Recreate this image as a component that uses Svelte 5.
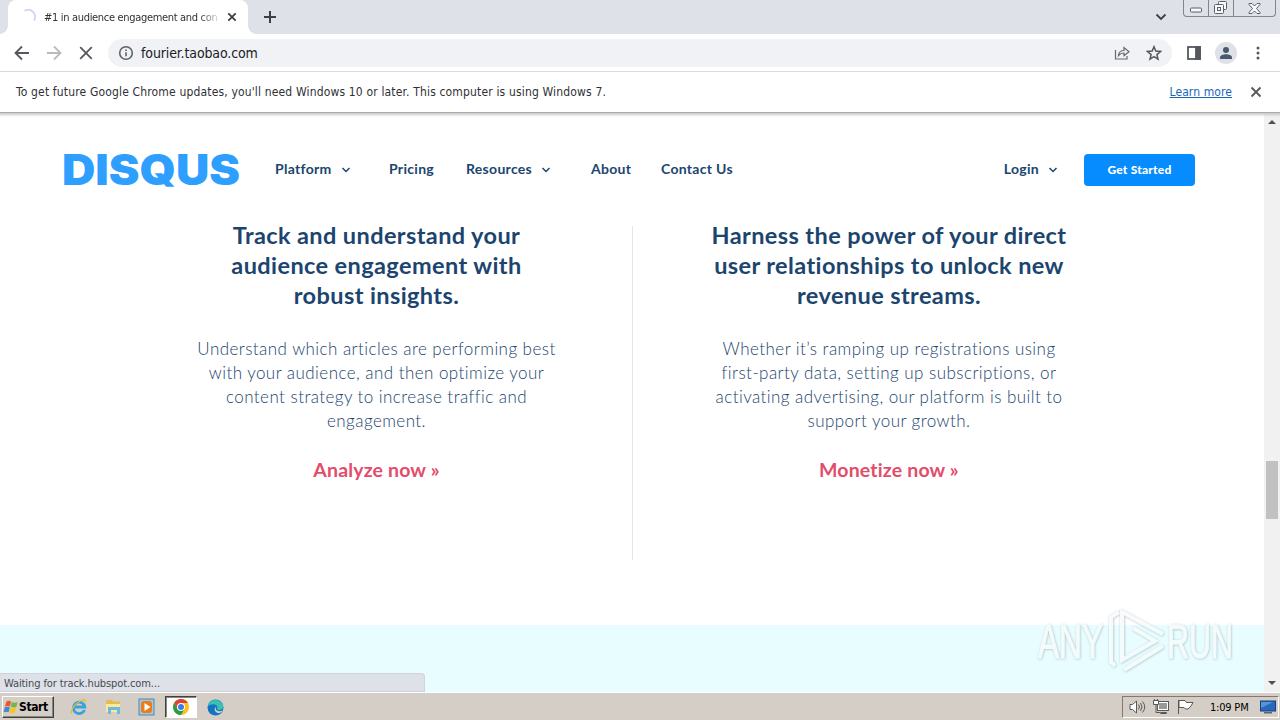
<script>
	const menu = [
		{ label: 'Platform', arrow: true, key: 'platform' },
		{ label: 'Pricing', key: 'pricing' },
		{ label: 'Resources', arrow: true, key: 'resources' },
		{ label: 'About', key: 'about' },
		{ label: 'Contact Us', key: 'contact' }
	];

	const features = [
		{
			title: ['Track and understand your', 'audience engagement with', 'robust insights.'],
			body: [
				'Understand which articles are performing best',
				'with your audience, and then optimize your',
				'content strategy to increase traffic and',
				'engagement.'
			],
			link: 'Analyze now »'
		},
		{
			title: ['Harness the power of your direct', 'user relationships to unlock new', 'revenue streams.'],
			body: [
				'Whether it’s ramping up registrations using',
				'first-party data, setting up subscriptions, or',
				'activating advertising, our platform is built to',
				'support your growth.'
			],
			link: 'Monetize now »'
		}
	];
</script>

{#snippet chevron()}
	<svg class="chevron" width="10" height="8" viewBox="0 0 10 8"><path d="M1.500 2l3.500 3.500L8.500 2" /></svg>
{/snippet}

<div class="screen">
	<div class="tabstrip">
		<div class="tab">
			<svg class="spinner" width="16" height="16" viewBox="0 0 16 16"><path d="M4.500 1.800A7 7 0 0 1 14 11.500" /></svg>
			<span class="tab-title">#1 in audience engagement and con</span>
			<svg class="tab-close" width="10" height="10" viewBox="0 0 10 10"><path d="M1.300 1.300l7.400 7.400M8.700 1.300L1.300 8.700" /></svg>
		</div>
		<svg class="new-tab" width="12" height="12" viewBox="0 0 12 12"><path d="M6 0v12M0 6h12" /></svg>
		<svg class="tab-search" width="12" height="8" viewBox="0 0 12 8"><path d="M1.500 1.500L6 6l4.500-4.500" /></svg>
		<div class="window-buttons">
			<div class="win min">
				<svg width="13" height="6" viewBox="0 0 13 6"><rect x=".5" y="1" width="11" height="4" rx="1" /></svg>
			</div>
			<div class="win restore">
				<svg width="14" height="14" viewBox="0 0 14 14">
					<path d="M4.500 3.500v-2q0-1 1-1h6q1 0 1 1v6q0 1-1 1h-2" />
					<rect x=".5" y="3.500" width="9" height="9" rx="1" />
					<rect x="3.500" y="6.500" width="3" height="3" />
				</svg>
			</div>
			<div class="win close">
				<svg width="13" height="11" viewBox="0 0 13 11">
					<path d="M1 .5h3l2.500 2.500L9 .5h3v1L8.500 5.500 12 9.500v1H9L6.500 8 4 10.500H1v-1l3.500-4L1 1.500z" />
				</svg>
			</div>
		</div>
	</div>

	<div class="toolbar">
		<svg class="nav-icon" width="16" height="16" viewBox="0 0 16 16"><path d="M15 8H2M8 1.500L1.500 8 8 14.500" /></svg>
		<svg class="nav-icon faded" width="16" height="16" viewBox="0 0 16 16"><path d="M1 8h13M8 1.500L14.500 8 8 14.500" /></svg>
		<svg class="nav-icon" width="16" height="16" viewBox="0 0 16 16"><path d="M2.200 2.200l11.600 11.600M13.800 2.200L2.200 13.800" /></svg>
		<div class="omnibox">
			<svg class="info" width="16" height="16" viewBox="0 0 16 16">
				<circle cx="8" cy="8" r="6.300" />
				<path d="M8 7.200v4M8 4.500v1.600" />
			</svg>
			<span class="url">fourier.taobao.com</span>
			<svg class="share" width="16" height="16" viewBox="0 0 16 16">
				<path d="M1.500 5v9h11.500v-3" />
				<path d="M4.500 10.500c.4-3.600 2.400-5 5.500-5V2.500L15 6.700l-5 4V8c-2.400 0-4 .7-5.500 2.500z" />
			</svg>
			<svg class="star" width="16" height="16" viewBox="0 0 16 16"><path d="M8 1.700l1.800 4.400 4.700.4-3.600 3.100 1.100 4.600L8 11.700l-4 2.500 1.100-4.600-3.600-3.100 4.700-.4z" /></svg>
		</div>
		<svg class="panel" width="14" height="14" viewBox="0 0 14 14">
			<rect x="1" y="1" width="12" height="12" />
			<rect class="solid" x="9" y="1" width="4" height="12" />
		</svg>
		<div class="avatar">
			<svg width="14" height="14" viewBox="0 0 14 14"><circle cx="7" cy="4" r="3" /><path d="M1 13v-1.500C1 9.400 4.500 8.300 7 8.300s6 1.100 6 3.200V13z" /></svg>
		</div>
		<svg class="dots" width="4" height="16" viewBox="0 0 4 16"><circle cx="2" cy="3" r="1.500" /><circle cx="2" cy="8" r="1.500" /><circle cx="2" cy="13" r="1.500" /></svg>
	</div>

	<div class="infobar">
		<span class="notice">To get future Google Chrome updates, you'll need Windows 10 or later. This computer is using Windows 7.</span>
		<span class="learn">Learn more</span>
		<svg class="info-close" width="12" height="12" viewBox="0 0 12 12"><path d="M1.500 1.500l9 9M10.500 1.500l-9 9" /></svg>
	</div>

	<div class="viewport">
		<div class="page">
			<header>
				<svg class="logo" width="178" height="52" viewBox="0 0 178 52">
					<text x="-1" y="41" textLength="178" lengthAdjust="spacingAndGlyphs">DISQUS</text>
				</svg>
				<nav>
					{#each menu as item}
						<span class="menu-item {item.key}">{item.label}{#if item.arrow}{@render chevron()}{/if}</span>
					{/each}
				</nav>
				<span class="menu-item login">Login{@render chevron()}</span>
				<button class="cta">Get Started</button>
			</header>

			<main>
				{#each features as feature}
					<section>
						<h2>
							{#each feature.title as line}<span>{line}</span>{/each}
						</h2>
						<p>
							{#each feature.body as line}<span>{line}</span>{/each}
						</p>
						<a href="#more">{feature.link}</a>
					</section>
				{/each}
			</main>
			<div class="band"></div>
		</div>
		<div class="scrollbar">
			<svg width="8" height="4" viewBox="0 0 8 4"><path d="M0 4l4-4 4 4z" /></svg>
			<div class="thumb"></div>
			<svg width="8" height="4" viewBox="0 0 8 4"><path d="M0 0l4 4 4-4z" /></svg>
		</div>
		<div class="status">Waiting for track.hubspot.com...</div>
		<svg class="watermark" width="220" height="78" viewBox="0 0 220 78">
			<defs>
				<filter id="glow" x="-10%" y="-10%" width="120%" height="120%">
					<feDropShadow dx="0.5" dy="0.5" stdDeviation="1.3" flood-color="#8d9ca0" flood-opacity="0.75" />
				</filter>
			</defs>
			<g class="mark" filter="url(#glow)">
				<text x="4" y="53" textLength="65" lengthAdjust="spacingAndGlyphs">ANY</text>
				<text x="133" y="53" textLength="66" lengthAdjust="spacingAndGlyphs">RUN</text>
				<path d="M85 7l-8 5v45l4 4" />
				<path d="M88 18V7l41 22" />
				<path d="M88 18v37l33-19-22-13" />
				<path d="M90 65l39-24" />
			</g>
		</svg>
	</div>

	<div class="taskbar">
		<div class="start">
			<svg width="16" height="16" viewBox="0 0 16 16">
				<path fill="#e9572b" d="M3.500 2.500q2.500-1.600 4.500 0L7 7.500q-2.500-1.200-5 0z" />
				<path fill="#75b843" d="M8.800 3q2.800 1.300 6 0l-1.500 5q-3 1.200-5.500-.2z" />
				<path fill="#3f87d0" d="M1.800 8.300q2.500-1.100 5 0l-1.200 5q-2.400-1.300-5 0z" />
				<path fill="#f8c51c" d="M7.600 8.700q2.700 1.200 5.500 0l-1.500 5q-2.800 1.300-5.200-.2z" />
			</svg>
			<b>Start</b>
		</div>
		<div class="pins">
			<div class="pin">
				<svg width="18" height="18" viewBox="0 0 18 18">
					<path fill="none" stroke="#36a3df" stroke-width="2.800" d="M14.500 12a5.700 5.700 0 1 1 .3-3H5" />
					<path fill="none" stroke="#e8bb30" stroke-width="1.300" d="M2 15.500C-.5 13 5 5.500 11 2.500c3-1.500 5-1 4 1.800" />
				</svg>
			</div>
			<div class="pin">
				<svg width="18" height="18" viewBox="0 0 18 18">
					<path fill="#e4bb50" d="M2 4l1-2h5l1 1.500h7V14H2z" />
					<path fill="#fbe89b" d="M2 6h14v8H2z" />
					<path fill="#6fb9df" d="M4 9h12v7h-3v-4H7v4H4z" />
				</svg>
			</div>
			<div class="pin">
				<svg width="18" height="18" viewBox="0 0 18 18">
					<rect x="1" y="1" width="15" height="16" fill="#9fc7e6" stroke="#5387b2" />
					<rect x="3" y="3" width="11" height="12" rx="3" fill="#ef7b13" />
					<path fill="#fff" d="M6.500 5l6 4-6 4z" />
				</svg>
			</div>
			<div class="pin active">
				<svg width="16" height="16" viewBox="0 0 16 16">
					<circle cx="8" cy="8" r="8" fill="#fbc116" />
					<path fill="#de4135" d="M1.100 4A8 8 0 0 1 15 4H8L4.500 10z" />
					<path fill="#259b4b" d="M1.100 4A8 8 0 0 0 8 16l3.500-6h-7z" />
					<circle cx="8" cy="8" r="4" fill="#fff" />
					<circle cx="8" cy="8" r="3" fill="#3b7de8" />
				</svg>
			</div>
			<div class="pin">
				<svg width="17" height="17" viewBox="0 0 17 17">
					<circle cx="8.500" cy="8.500" r="8" fill="#1474c4" />
					<path fill="#39c2b2" d="M1 6C3 0 12-1 15.500 5c2 4-1 6.500-4 6-2-.5-1-2-1-3C10 5 5 4 1 7z" />
					<path fill="#d5cec6" d="M9.300 7.500c-2 4 2 5.700 6.500 4-1 1.500-2 2.300-3.500 2.800-4-.4-6.500-3.800-3-6.800z" />
				</svg>
			</div>
		</div>
		<div class="tray">
			<svg width="17" height="16" viewBox="0 0 17 16">
				<path class="white" d="M1 5.500h2.500L7.500 2v12l-4-3.500H1z" />
				<path class="line" d="M9.500 5.500q2 2.500 0 5M11.500 4q3 4 0 8M13.500 2.500q4.500 5.500 0 11" />
			</svg>
			<svg width="17" height="16" viewBox="0 0 17 16">
				<rect class="white" x="4.500" y="2.500" width="11" height="9" />
				<rect x="6" y="4" width="8" height="6" fill="#999" />
				<path class="white" d="M7.500 13.500h6v1h-6zM.5 1.500h5v4h-5z" />
				<path class="line" d="M1.500 0v2M4.500 0v2M3 5.500v8h4" />
			</svg>
			<svg width="17" height="16" viewBox="0 0 17 16">
				<path class="line" d="M1.500 1v14" />
				<path class="white" d="M2 1.500h6l1.500 2H16l-2 3.500-3 3H8.500L7 8.500H2z" />
			</svg>
			<span class="clock">1:09 PM</span>
			<svg width="16" height="14" viewBox="0 0 16 14">
				<rect x=".5" y="1" width="15" height="10" fill="#2769bd" stroke="#193e7b" />
				<path fill="#74b2ef" d="M1 2h12L1 8z" opacity=".6" />
				<path fill="#526879" d="M4 12h8v1.500H4z" />
			</svg>
		</div>
	</div>
</div>

<style>
	:global(body) {
		margin: 0;
		overflow: hidden;
	}

	.screen {
		width: 1280px;
		height: 720px;
		display: flex;
		flex-direction: column;
		background: #fff;
		font-family: 'DejaVu Sans Condensed', 'DejaVu Sans', sans-serif;
		color: #303134;
	}

	svg {
		display: block;
		flex-shrink: 0;
		fill: none;
	}

	.tabstrip {
		height: 34px;
		flex-shrink: 0;
		display: flex;
		background: #dee1e8;
	}

	.tab {
		position: relative;
		box-sizing: border-box;
		width: 240px;
		margin-left: 8px;
		padding: 0 11px 0 12px;
		display: flex;
		align-items: center;
		background: #fff;
		border-radius: 8px 8px 0 0;
	}

	.tab::before,
	.tab::after {
		content: '';
		position: absolute;
		bottom: 0;
		width: 8px;
		height: 8px;
	}

	.tab::before {
		left: -8px;
		background: radial-gradient(circle at 0 0, transparent 7.5px, #fff 8px);
	}

	.tab::after {
		right: -8px;
		background: radial-gradient(circle at 100% 0, transparent 7.5px, #fff 8px);
	}

	.spinner {
		stroke: #cfd2f3;
		stroke-width: 1.7;
	}

	.tab-title {
		width: 176px;
		margin-left: 8px;
		white-space: nowrap;
		font-size: 11px;
		letter-spacing: -0.32px;
		mask-image: linear-gradient(90deg, #000 155px, transparent 178px);
	}

	.tab-close {
		margin-left: 7px;
		stroke: #3c4043;
		stroke-width: 1.8;
	}

	.new-tab {
		margin: 11px 0 0 16px;
		stroke: #3c4043;
		stroke-width: 2;
	}

	.tab-search {
		margin: 13px 16px 0 auto;
		stroke: #3c4043;
		stroke-width: 1.8;
	}

	.window-buttons {
		height: 16px;
		margin-right: 4px;
		display: flex;
		border: 1px solid #81868e;
		border-top: 0;
		border-radius: 0 0 4px 4px;
	}

	.win {
		display: flex;
		justify-content: center;
		align-items: center;
		border-left: 1px solid #81868e;
	}

	.win svg {
		stroke: #596068;
		fill: #f8f9fa;
	}

	.min {
		width: 24px;
		border: 0;
	}

	.min svg {
		margin-top: 4px;
	}

	.restore {
		width: 24px;
	}

	.close {
		width: 41px;
	}

	.toolbar {
		height: 37px;
		flex-shrink: 0;
		display: flex;
		align-items: center;
		padding-left: 14px;
		border-bottom: 1px solid #d8dadd;
	}

	.nav-icon {
		margin-right: 16px;
		stroke: #55585c;
		stroke-width: 1.8;
	}

	.nav-icon.faded {
		stroke: #b8babd;
	}

	.omnibox {
		box-sizing: border-box;
		width: 1064px;
		height: 28px;
		margin-left: -2px;
		padding: 0 10px;
		display: flex;
		align-items: center;
		border-radius: 14px;
		background: #f0f2f5;
	}

	.info {
		stroke: #5f6368;
		stroke-width: 1.6;
	}

	.url {
		margin: 0 auto 0 7px;
		font-size: 14px;
		letter-spacing: -0.12px;
		color: #202124;
	}

	.share {
		margin-right: 16px;
		stroke: #66696d;
		stroke-width: 1.2;
	}

	.star {
		stroke: #55585c;
		stroke-width: 1.5;
	}

	.panel {
		margin-left: 15px;
		stroke: #55585c;
		stroke-width: 1.8;
	}

	.panel .solid {
		fill: #55585c;
	}

	.avatar {
		width: 22px;
		height: 22px;
		margin-left: 14px;
		display: flex;
		align-items: center;
		justify-content: center;
		border-radius: 50%;
		background: #dee1e6;
	}

	.avatar svg {
		fill: #4c5870;
	}

	.dots {
		margin-left: 19px;
		fill: #55585c;
	}

	.infobar {
		height: 40px;
		flex-shrink: 0;
		display: flex;
		align-items: center;
		padding: 0 18px 0 16px;
		font-size: 12px;
		border-bottom: 1px solid #aaa;
	}

	.notice {
		margin-right: auto;
		white-space: nowrap;
		letter-spacing: 0.16px;
	}

	.learn {
		margin-right: 18px;
		color: #1868b7;
		text-decoration: underline;
		letter-spacing: 0.1px;
	}

	.info-close {
		stroke: #55585c;
		stroke-width: 1.8;
	}

	.viewport {
		position: relative;
		height: 579px;
		flex-shrink: 0;
		display: flex;
	}

	.viewport::before {
		content: '';
		position: absolute;
		left: 0;
		right: 0;
		top: 0;
		height: 4px;
		background: linear-gradient(#c9c9c9, transparent);
	}

	.page {
		width: 1264px;
		display: flex;
		flex-direction: column;
		font-family: Lato, sans-serif;
		color: #1b456e;
	}

	header {
		height: 113px;
		box-sizing: border-box;
		padding: 0 69px 0 63px;
		display: flex;
		align-items: center;
		font-weight: 700;
	}

	.logo text {
		font: 900 42px Inter, Lato, sans-serif;
		fill: #2e9fff;
	}

	nav {
		display: flex;
		margin: 0 auto 0 34px;
	}

	.menu-item {
		display: flex;
		align-items: center;
		padding-bottom: 2px;
		font-size: 14px;
		letter-spacing: 0.3px;
		white-space: nowrap;
	}

	.platform {
		width: 114px;
	}

	.pricing {
		width: 77px;
	}

	.resources {
		width: 125px;
	}

	.about {
		width: 70px;
	}

	.chevron {
		margin: 3px 0 0 9px;
		stroke: #1b456e;
		stroke-width: 1.5;
	}

	.cta {
		width: 111px;
		height: 32px;
		margin-left: 26px;
		padding: 0;
		border: 0;
		border-radius: 4px;
		background: #078cff;
		color: #fff;
		font: 900 12px Lato, sans-serif;
		letter-spacing: 0.22px;
	}

	main {
		height: 334px;
		padding: 0 120px;
		display: flex;
	}

	section {
		box-sizing: border-box;
		width: 512px;
		padding-left: 1px;
		display: flex;
		flex-direction: column;
		align-items: center;
		text-align: center;
	}

	section + section {
		border-left: 1px solid #e1e6ea;
	}

	h2,
	p {
		margin: 0;
	}

	h2 span,
	p span {
		display: block;
		white-space: nowrap;
	}

	h2 {
		margin-top: -6px;
		font-size: 23.5px;
		line-height: 30px;
		letter-spacing: 0.4px;
	}

	p {
		margin-top: 27px;
		font-size: 17px;
		line-height: 24px;
		font-weight: 300;
		letter-spacing: 0.45px;
	}

	section a {
		margin-top: 25px;
		color: #e34c6b;
		font-size: 19.5px;
		line-height: 24px;
		font-weight: 700;
		letter-spacing: 0.15px;
		text-decoration: none;
	}

	.band {
		flex: 1;
		margin-top: 65px;
		background: #e7fdff;
	}

	.scrollbar {
		width: 16px;
		display: flex;
		flex-direction: column;
		align-items: center;
		box-sizing: border-box;
		padding: 7px 0;
		background: #f1f1f1;
	}

	.scrollbar svg {
		fill: #505050;
	}

	.thumb {
		width: 12px;
		height: 58px;
		margin: 337px 0 auto;
		background: #c1c1c1;
	}

	.status {
		position: absolute;
		left: 0;
		bottom: 0;
		box-sizing: border-box;
		width: 425px;
		height: 19px;
		padding-left: 4px;
		border: 1px solid #d0d3d9;
		border-left: 0;
		border-radius: 0 4px 0 0;
		background: #dee1e8;
		font-size: 11px;
		line-height: 19px;
		letter-spacing: -0.1px;
		color: #454a50;
	}

	.watermark {
		position: absolute;
		left: 1034px;
		top: 492px;
	}

	.watermark text {
		font: 48px 'Liberation Sans', sans-serif;
	}

	.mark {
		stroke: #f6fbfc;
		stroke-width: 4;
		opacity: 0.85;
	}

	.mark text {
		fill: #f6fbfc;
		stroke-width: 1;
	}

	.taskbar {
		height: 28px;
		flex-shrink: 0;
		box-sizing: border-box;
		display: flex;
		align-items: center;
		padding: 1px 0 0 2px;
		border-top: 1px solid #fff;
		background: #d5cec6;
		color: #000;
	}

	.start {
		box-sizing: border-box;
		width: 52px;
		height: 22px;
		display: flex;
		align-items: center;
		border: 1px solid;
		border-color: #fff #404040 #404040 #fff;
		box-shadow: inset -1px -1px #8a8680;
		font-size: 12px;
	}

	.start b {
		letter-spacing: -0.4px;
	}

	.pins {
		display: flex;
		margin: 0 auto 0 9px;
	}

	.pin {
		box-sizing: border-box;
		width: 32px;
		height: 22px;
		margin-right: 2px;
		display: flex;
		align-items: center;
		justify-content: center;
	}

	.pin.active {
		background: #fff;
		border: 1px solid;
		border-color: #404040 #fff #fff #404040;
		box-shadow: inset 1px 1px #8a8680;
	}

	.tray {
		box-sizing: border-box;
		width: 157px;
		height: 22px;
		margin-right: 1px;
		padding-left: 6px;
		display: flex;
		align-items: center;
		gap: 7px;
		border: 1px solid;
		border-color: #7d7973 #fff #fff #7d7973;
	}

	.white {
		fill: #fff;
		stroke: #595959;
	}

	.line {
		stroke: #595959;
	}

	.clock {
		width: 43px;
		margin-left: 9px;
		white-space: nowrap;
		font-size: 11px;
		letter-spacing: -0.2px;
	}
</style>
